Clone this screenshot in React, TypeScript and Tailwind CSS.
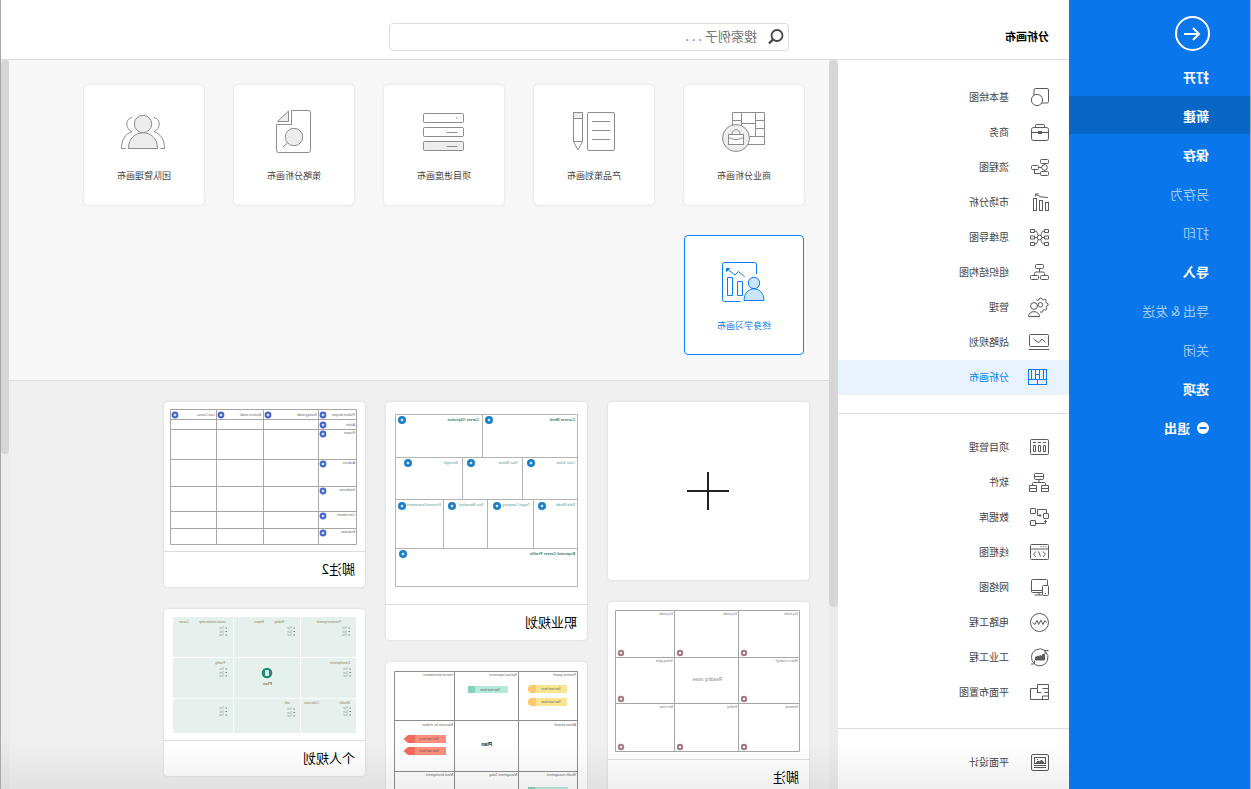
import { useState, type ReactNode } from 'react';
import clsx from 'clsx';

type Point = [number, number];
type Label = [number, number, string];

interface MenuItem {
    label: string;
    muted?: boolean;
    icon?: ReactNode;
}

interface Category {
    label: string;
    icon: ReactNode;
}

const menuItems: MenuItem[] = [
    { label: '打开' },
    { label: '新建' },
    { label: '保存' },
    { label: '另存为', muted: true },
    { label: '打印', muted: true },
    { label: '导入' },
    { label: '导出 & 发送', muted: true },
    { label: '关闭', muted: true },
    { label: '选项' },
    {
        label: '退出',
        icon: (
            <svg viewBox="0 0 12 12" className="mr-[7px] h-3 w-3" aria-hidden="true">
                <circle cx="6" cy="6" r="6" fill="#fff" />
                <path d="M2.5 6h7" stroke="#0a76eb" strokeWidth="2" />
            </svg>
        ),
    },
];

const categoryGroups: Category[][] = [
    [
        {
            label: '基本绘图',
            icon: (
                <>
                    <rect x="1.5" y="1.5" width="14.5" height="14.5" rx="1.5" />
                    <circle cx="13" cy="13" r="5.6" fill="#fff" />
                </>
            ),
        },
        {
            label: '商务',
            icon: (
                <>
                    <rect x="1.5" y="5.5" width="17" height="13" rx="2" />
                    <path d="M5.5 5.5v-2q0-1 1-1h7q1 0 1 1v2M1.5 10.5h17" />
                    <rect x="8.5" y="9.5" width="3" height="2" fill="currentColor" />
                </>
            ),
        },
        {
            label: '流程图',
            icon: (
                <>
                    <rect x="1.5" y="2.5" width="8" height="4" rx="1" />
                    <rect x="1.5" y="14.5" width="8" height="4" rx="1" />
                    <rect x="11.5" y="8.5" width="7" height="4" rx="1" />
                    <circle cx="5.5" cy="10.5" r="2.8" />
                    <path d="M5.5 6.5v1.2M5.5 13.3v1.2M8.3 10.5h3.2M15.5 12.5v4h-6" />
                </>
            ),
        },
        {
            label: '市场分析',
            icon: (
                <>
                    <rect x="1.5" y="10.5" width="3" height="8" />
                    <rect x="7.5" y="8.5" width="3" height="10" />
                    <rect x="13.5" y="6.5" width="3" height="12" />
                    <path d="M2 5.5q8 .4 12-3M11.5 1.8l3 .2-.3 2.6" />
                </>
            ),
        },
        {
            label: '思维导图',
            icon: (
                <>
                    <path d="M1.5 2.5h4v3h-4zM1.5 9h4v3h-4zM1.5 15.5h4v3h-4zM15.5 2.5h4v3h-4zM15.5 9h4v3h-4zM15.5 15.5h4v3h-4z" />
                    <circle cx="10.5" cy="10.5" r="2.3" />
                    <path d="M5.5 10.5h2.7M12.8 10.5h2.7M5.5 4q3.3 0 3.5 4.5M5.5 17q3.3 0 3.5-4.5M15.5 4Q12.2 4 12 8.5M15.5 17q-3.3 0-3.5-4.5" />
                </>
            ),
        },
        {
            label: '组织结构图',
            icon: (
                <>
                    <rect x="6.5" y="2.5" width="8" height="4" rx="1" />
                    <rect x="1.5" y="13.5" width="8" height="4" rx="1" />
                    <rect x="11.5" y="13.5" width="8" height="4" rx="1" />
                    <path d="M10.5 6.5v3.5M5.5 13.5v-2q0-1.5 1.5-1.5h7q1.5 0 1.5 1.5v2" />
                </>
            ),
        },
        {
            label: '管理',
            icon: (
                <>
                    <path d="M10 14.5l-1 .9-1.6-.6-.2-1.5-1.4-.7-1.5.6-1.2-1.3.7-1.5-.5-1.4-1.4-.7.1-1.7 1.5-.5.7-1.4-.5-1.5 1.4-1.1 1.4.8 1.4-.5.8-1.4 1.7.2.4 1.5 1.4.7 1.4-.6" />
                    <circle cx="9.5" cy="7.8" r="2.3" />
                    <circle cx="16" cy="9" r="3.4" fill="#fff" />
                    <path d="M10.5 19.5c0-6.5 11-6.5 11 0z" />
                </>
            ),
        },
        {
            label: '战略规划',
            icon: (
                <>
                    <rect x="1.5" y="2.5" width="19" height="12" rx="1" />
                    <path d="M1 17.5h20M4.5 10.5l3.5-3.5 3 3.5 2-1 3.5-2.5" />
                </>
            ),
        },
        {
            label: '分析画布',
            icon: (
                <>
                    <rect x="3.5" y="2.5" width="18" height="15" />
                    <path d="M3.5 12.5h18M6.5 2.5v10M10.5 2.5v10M14.5 2.5v10M18.5 2.5v10M10.5 7.5h4M12.5 12.5v5" />
                </>
            ),
        },
    ],
    [
        {
            label: '项目管理',
            icon: (
                <>
                    <rect x="1.5" y="2.5" width="18" height="15" rx="1" />
                    <path d="M4 5.5h3M9 5.5h3M14 5.5h3M4.5 8.5h2v6h-2zM9.5 8.5h2v6h-2zM14.5 8.5h2v6h-2z" />
                </>
            ),
        },
        {
            label: '软件',
            icon: (
                <>
                    <rect x="6.5" y="1.5" width="9" height="6" rx="1" />
                    <path d="M6.5 4.5h9M11 7.5v3M4.5 13.5v-2q0-1 1-1h11q1 0 1 1v2" />
                    <path d="M1.5 13.5h7v6h-7zM1.5 16.5h7M13.5 13.5h7v6h-7zM13.5 16.5h7" />
                </>
            ),
        },
        {
            label: '数据库',
            icon: (
                <>
                    <rect x="14.5" y="1.5" width="5" height="5" rx=".5" />
                    <rect x="1.5" y="6.5" width="5" height="5" rx=".5" />
                    <rect x="14.5" y="13.5" width="5" height="5" rx=".5" />
                    <path d="M3.5 6.5v-4h9v6H9M10.5 7L9 8.5l1.5 1.5M14.5 16.5h-10v-3M3 15l1.5-1.5L6 15" />
                </>
            ),
        },
        {
            label: '线框图',
            icon: (
                <>
                    <rect x="1.5" y="2.5" width="18" height="15" rx="1" />
                    <path d="M1.5 7h18M3.5 4.7h1M6 4.7h1M8.5 4.7h1M7 9.5l-2.5 2.7L7 15M14 9.5l2.5 2.7L14 15M11.5 9.5l-2 5" />
                </>
            ),
        },
        {
            label: '网络图',
            icon: (
                <>
                    <path d="M2.5 8.5v-5q0-1 1-1h14q1 0 1 1v11q0 1-1 1h-10M7.5 13.5h11M11 15.5v2.5M7.5 18h8" />
                    <rect x="1.5" y="8.5" width="6" height="10" rx="1" />
                    <path d="M4 16.5h1" />
                </>
            ),
        },
        {
            label: '电路工程',
            icon: (
                <>
                    <circle cx="10.5" cy="10.5" r="9" />
                    <path d="M3.5 10.5l1.5-2 2 4 2-4.5 2.3 4.5 1.7-4 2.2 4 1.8-2" />
                </>
            ),
        },
        {
            label: '工业工程',
            icon: (
                <>
                    <path d="M2.5 13.5A8.5 8.5 0 0 0 15 17.5M5 3.5A8.500 8.500 0 0 1 18.500 10.500M4.500 4.500A8.500 8.500 0 0 0 2.500 13.500M18.500 10.500A8.500 8.500 0 0 1 16 16.500" />
                    <path d="M1.5 3.5h3.5v3.500M19 17h-3.500v-3.500" />
                    <path d="M5.5 13V7.5h2v2l2.7-1v1.5l2.3-1v1h2v3z" fill="currentColor" />
                </>
            ),
        },
        {
            label: '平面布置图',
            icon: (
                <path d="M1.5 2.5h11v4h7v11h-18zM1.5 6.5h6M1.5 10.5h4M12.5 6.5v4M9 10.5h4M7.5 17.5v-3.5h-6" />
            ),
        },
    ],
    [
        {
            label: '平面设计',
            icon: (
                <>
                    <rect x="1.5" y="2.5" width="17" height="16" rx="1.5" />
                    <rect x="4.5" y="5.5" width="11" height="6" />
                    <path d="M6 11l2.5-3 2 2 1.5-1 2 2z" fill="currentColor" />
                    <path d="M4 13.5h12M4 15.5h12M12 7.5h1" />
                </>
            ),
        },
    ],
];

const templates: Category[] = [
    {
        label: '商业分析画布',
        icon: (
            <>
                <path d="M3.5 4.5h32v32h-32zM12.5 4.5v24M26.5 4.5v24M3.5 12.5h9M3.5 20.5h9M26.5 12.5h9M12.5 15.5h14M3.5 28.5h20" />
                <circle cx="32" cy="30" r="13.5" fill="#ededed" />
                <path d="M28 26.5c0-6.5 8-6.5 8 0" />
                <rect x="24.5" y="26.5" width="15" height="10" fill="#fff" />
                <path d="M24.5 29.5q7.5 4 15 0" />
            </>
        ),
    },
    {
        label: '产品策划画布',
        icon: (
            <>
                <rect x="3.5" y="4.5" width="27" height="38" rx="1.5" />
                <path d="M8 13.5h18M8 22.5h18M8 31.5h18" />
                <path d="M35.5 4.5h9v29l-4.5 8.5-4.5-8.5zM35.5 33.5h9" />
                <path d="M35.5 4.5h9v6h-9z" fill="#ededed" />
            </>
        ),
    },
    {
        label: '项目进度画布',
        icon: (
            <>
                <rect x="4.5" y="5.5" width="40" height="9" rx="1" />
                <rect x="4.5" y="19.5" width="40" height="9" rx="1" />
                <rect x="4.5" y="33.5" width="40" height="9" rx="1" fill="#ededed" />
                <path d="M10.5 10h1.5M10.5 24.5h11M10.5 38.5h11" />
            </>
        ),
    },
    {
        label: '策略分析画布',
        icon: (
            <>
                <path d="M26.5 2.5h-17q-2 0-2 2v38q0 2 2 2h30q2 0 2-2v-26h-15z" />
                <path d="M29.5 3v10.5h11z" fill="#ededed" />
                <circle cx="24" cy="29" r="8.7" fill="#ededed" />
                <path d="M30.5 35l4.5 4" />
            </>
        ),
    },
    {
        label: '团队管理画布',
        icon: (
            <>
                <circle cx="25" cy="16" r="8.7" fill="#ededed" />
                <path d="M10.5 40.5c0-21 29-21 29 0z" fill="#ededed" />
                <path d="M14 9.3c-7 2-7 11 0 14.4C7 26 3.5 32 3.5 40.5h4M36 9.3c7 2 7 11 0 14.4C43 26 46.5 32 46.5 40.5h-4" />
            </>
        ),
    },
    {
        label: '终身学习画布',
        icon: (
            <>
                <path d="M11.5 16V6.5q0-2 2-2h30q2 0 2 2v35q0 2-2 2h-16" />
                <path d="M35.5 19.5h5v18h-5zM25.5 23.5h5v14h-5z" />
                <path d="M23.5 18.5l6-5 3.5 3.5 7-5.5" />
                <path d="M41.5 10.5h-3l3 3z" fill="currentColor" />
                <circle cx="14" cy="25" r="5.7" fill="#cce5ff" />
                <path d="M4 42.5c0-15.5 20-15.5 20 0z" fill="#cce5ff" />
            </>
        ),
    },
];

function Dots({ points, color, r }: { points: Point[]; color: string; r: number }) {
    return (
        <>
            {points.map(([x, y]) => (
                <g key={`${x}-${y}`}>
                    <circle cx={x} cy={y} r={r} fill={color} />
                    <rect x={x - 1.3} y={y - 1.3} width="2.6" height="2.6" rx="1" fill="#fff" fillOpacity=".8" />
                </g>
            ))}
        </>
    );
}

function Labels({ items, color, size }: { items: Label[]; color: string; size: number }) {
    return (
        <g fill={color} fontSize={size} fontFamily="'Liberation Sans', Arial, sans-serif">
            {items.map(([x, y, text]) => (
                <text key={`${x}-${y}`} x={x} y={y}>
                    {text}
                </text>
            ))}
        </g>
    );
}

function CareerThumb() {
    return (
        <svg viewBox="0 0 201 202" className="block w-full" aria-hidden="true">
            <path
                d="M9.5 12.5h182v172h-182zM9.5 55.5h182M9.5 97.5h182M9.5 146.5h182M104.5 12.5v43M64.5 55.5v42M124.5 55.5v42M53.5 97.5v49M99.5 97.5v49M143.5 97.5v49"
                fill="none"
                stroke="#b4b4b4"
            />
            <Dots
                r={4}
                color="#1b7fc8"
                points={[
                    [98, 18], [185, 18], [56, 61], [116, 61], [179, 61],
                    [45, 104], [90, 104], [135, 104], [185, 104], [184, 152],
                ]}
            />
            <g fontWeight="bold">
                <Labels
                    size={4}
                    color="#2b7d77"
                    items={[[12, 19, 'Current Work'], [108, 19, 'Career Objective'], [12, 153, 'Expected Career Profile']]}
                />
            </g>
            <Labels
                size={3.8}
                color="#5c9a95"
                items={[
                    [12, 62, 'Core Value'], [69, 62, 'Your Motive'], [129, 62, 'Strength'],
                    [12, 104, 'Role Model'], [57, 104, 'Target Company'],
                    [103, 104, 'Your Boundary'], [146, 104, 'Personal Investment'],
                ]}
            />
        </svg>
    );
}

function PlatformThumb() {
    return (
        <svg viewBox="0 0 201 149" className="block w-full" aria-hidden="true">
            <path
                d="M8.5 7.5h186v135h-186zM8.5 17.5h186M8.5 27.5h186M8.5 57.5h186M8.5 84.5h186M8.5 109.5h186M8.5 126.5h186M46.5 7.5v135M101.5 7.5v135M148.5 7.5v135"
                fill="none"
                stroke="#a6a6a6"
            />
            <Dots
                r={3.4}
                color="#4467cc"
                points={[
                    [42, 13], [97, 13], [144, 13], [190, 13], [42, 23],
                    [42, 32], [42, 62], [42, 89], [42, 114], [42, 131],
                ]}
            />
            <Labels
                size={3}
                color="#666"
                items={[
                    [10, 14, 'Platform designer'], [48, 14, 'Strategy model'], [104, 14, 'Business model'],
                    [150, 14, 'Lean Canvas'], [10, 24, 'Author'], [10, 32, 'Purpose'], [10, 62, 'Audience'],
                    [10, 89, 'Introduction'], [10, 114, 'Core element'], [10, 131, 'Evaluation'],
                ]}
            />
        </svg>
    );
}

function PersonalThumb() {
    const lists: Point[] = [
        [15, 19], [70, 19], [138, 19], [14, 60], [138, 60], [14, 99], [70, 100], [138, 99],
    ];

    return (
        <svg viewBox="0 0 201 131" className="block w-full" aria-hidden="true">
            <g fill="#e6f1ee">
                {[8, 49, 90].map((y) => (
                    <g key={y}>
                        <rect x="9" y={y} width="55" height={y === 90 ? 34 : 40} />
                        <rect x="65" y={y} width="66" height={y === 90 ? 34 : 40} />
                        <rect x="132" y={y} width="60" height={y === 90 ? 34 : 40} />
                    </g>
                ))}
            </g>
            <Labels
                size={3.4}
                color="#8f8053"
                items={[
                    [24, 14, 'Personal growth'], [81, 14, 'Hobby'], [101, 14, 'Hopes'],
                    [139, 14, 'social relationship'], [176, 14, 'Career'], [15, 55, 'Development'],
                    [140, 55, 'Family'], [15, 95, 'Wealth'], [46, 95, 'Collection'], [75, 95, 'self'],
                ]}
            />
            {lists.map(([x, y]) => (
                <g key={`${x}-${y}`}>
                    <path
                        d={`M${x} ${y}h1.5M${x} ${y + 3.5}h1.5M${x} ${y + 7}h1.5`}
                        stroke="#6f7f7b"
                        strokeWidth="1.2"
                    />
                    <Labels
                        size={2.6}
                        color="#8a9793"
                        items={[[x + 3, y + 1, 'Text'], [x + 3, y + 4.5, 'Text'], [x + 3, y + 8, 'Text']]}
                    />
                </g>
            ))}
            <circle cx="98" cy="64" r="5.3" fill="#1d8a72" />
            <rect x="96" y="61" width="4" height="6" rx=".7" fill="#d5ece6" />
            <g fontWeight="bold">
                <Labels size={4.4} color="#8f7a4c" items={[[93, 76, 'Plan']]} />
            </g>
        </svg>
    );
}

function PlanThumb() {
    return (
        <svg viewBox="0 0 201 170" className="block w-full" aria-hidden="true">
            <path
                d="M9.5 9.5h183v152h-183zM9.5 58.5h183M9.5 109.5h183M68.5 9.5v152M132.5 9.5v152"
                fill="none"
                stroke="#8c8c8c"
            />
            <Labels
                size={3.2}
                color="#666"
                items={[
                    [11, 14, 'Personal growth'], [70, 14, 'Spiritual experience'], [134, 14, 'Internal development'],
                    [11, 64, 'Advanced work'], [134, 64, 'Education for children'],
                    [11, 114, 'Wealth management'], [70, 114, 'Management Today'], [134, 114, 'Moral development'],
                ]}
            />
            {[23, 36].map((y) => (
                <g key={y}>
                    <rect x="20" y={y} width="32" height="8" fill="#fae593" />
                    <path d={`M51 ${y}h4a4 4 0 0 1 0 8h-4z`} fill="#fcc76d" />
                </g>
            ))}
            <rect x="79" y="24" width="34" height="7" fill="#b5e9dc" />
            <rect x="112" y="24" width="7" height="7" fill="#87d1bd" />
            <rect x="19" y="125" width="34" height="7" fill="#b5e9dc" />
            <rect x="52" y="125" width="7" height="7" fill="#87d1bd" />
            {[73, 85].map((y) => (
                <g key={y}>
                    <rect x="141" y={y} width="32" height="8" fill="#fb8f7d" />
                    <path d={`M172 ${y}h7l4.5 4-4.5 4h-7z`} fill="#f26d5c" />
                </g>
            ))}
            <Labels
                size={3.2}
                color="#555"
                items={[
                    [26, 28, 'Your text here'], [26, 41, 'Your text here'], [87, 29, 'Your text here'],
                    [148, 78, 'Your text here'], [148, 90, 'Your text here'],
                ]}
            />
            <g fontWeight="bold">
                <Labels size={5} color="#111" items={[[95, 84, 'Plan']]} />
            </g>
        </svg>
    );
}

function ReadingThumb() {
    return (
        <svg viewBox="0 0 201 157" className="block w-full" aria-hidden="true">
            <path
                d="M9.5 8.5h184v141h-184zM9.5 55.5h184M9.5 101.5h184M70.5 8.5v141M134.5 8.5v141"
                fill="none"
                stroke="#a6a6a6"
            />
            <Labels
                size={3}
                color="#777"
                items={[
                    [11, 13, 'Key words'], [72, 13, 'Key words'], [136, 13, 'Key words'],
                    [11, 60, 'What is reading?'], [136, 60, 'Setting goals'],
                    [11, 106, 'Summary'], [72, 106, 'Finding'], [136, 106, 'Best story'],
                ]}
            />
            <Labels size={4.6} color="#8a8a8a" items={[[87, 79, 'Reading notes']]} />
            <Dots
                r={3.2}
                color="#a5787f"
                points={[
                    [65, 51], [129, 51], [188, 51], [65, 97], [188, 97], [65, 145], [129, 145], [188, 145],
                ]}
            />
        </svg>
    );
}

function ExampleCard({ label, children }: { label?: string; children: ReactNode }) {
    return (
        <button
            type="button"
            className="w-full overflow-hidden rounded bg-white text-left shadow-[0_0_3px_rgba(0,0,0,0.12)]"
        >
            {children}
            {label && (
                <span className="flex h-9 items-center border-t border-[#dcdcdc] px-[10px] pb-0.5 text-[13px] text-black">
                    {label}
                </span>
            )}
        </button>
    );
}

function ScrollTrack({ thumbClass, className }: { thumbClass: string; className: string }) {
    return (
        <div className={clsx('shrink-0 bg-[#ebebeb]', className)} aria-hidden="true">
            <div className={clsx('rounded-full bg-[#d6d6d6]', thumbClass)} />
        </div>
    );
}

export default function App() {
    const [menu, setMenu] = useState('新建');
    const [category, setCategory] = useState('分析画布');
    const [template, setTemplate] = useState('终身学习画布');

    return (
        <div
            className="relative flex h-screen w-full -scale-x-100 overflow-hidden border-x border-[#a8a8a8] bg-white font-['Noto_Sans_CJK_SC',sans-serif] text-[#444]"
            lang="zh-CN"
        >
            <nav className="w-[181px] shrink-0 bg-[#0a76eb] pt-4">
                <button
                    type="button"
                    aria-label="返回"
                    className="mb-[6px] ml-10 flex h-[35px] w-[35px] items-center justify-center rounded-full border-2 border-white"
                >
                    <svg viewBox="0 0 18 16" className="h-4 w-[18px]" fill="none" stroke="#fff" strokeWidth="2" aria-hidden="true">
                        <path d="M17 8H2M8 2L2 8l6 6" />
                    </svg>
                </button>
                <ul className="flex flex-col gap-px">
                    {menuItems.map((item) => (
                        <li key={item.label}>
                            <button
                                type="button"
                                onClick={() => setMenu(item.label)}
                                className={clsx(
                                    'flex h-[38px] w-full items-center pt-0.5 pl-[41px] text-[13px]',
                                    menu === item.label && 'bg-[#0866c6]',
                                    item.muted ? 'text-[#a0cbf8]' : 'font-bold text-white'
                                )}
                            >
                                {item.icon}
                                {item.label}
                            </button>
                        </li>
                    ))}
                </ul>
            </nav>

            <div className="flex min-w-0 flex-1 flex-col">
                <header className="flex h-[60px] shrink-0 border-b border-[#dcdcdc]">
                    <h1 className="w-[280px] shrink-0 pt-7 pl-5 text-[11px] leading-4 font-bold text-black">
                        分析画布
                    </h1>
                    <div className="mt-[23px] flex h-7 w-[400px] items-center rounded-sm border border-[#dcdcdc] pl-1">
                        <svg viewBox="0 0 16 16" className="h-4 w-4 shrink-0" fill="none" stroke="#444" aria-hidden="true">
                            <circle cx="7" cy="6.5" r="5.5" strokeWidth="1.8" />
                            <path d="M11 10.5l4 4" strokeWidth="2.4" />
                        </svg>
                        <input
                            type="search"
                            aria-label="搜索例子"
                            placeholder="搜索例子 . . ."
                            className="min-w-0 flex-1 bg-transparent pr-2 pb-0.5 pl-[11px] text-[13px] text-[#444] outline-none placeholder:text-[#757575]"
                        />
                    </div>
                </header>

                <div className="flex min-h-0 flex-1">
                    <aside className="w-[231px] shrink-0 overflow-hidden bg-white pt-5">
                        {categoryGroups.map((group, index) => (
                            <ul
                                key={index}
                                className={clsx(index > 0 && 'mt-[18px] border-t border-[#dcdcdc] pt-4')}
                            >
                                {group.map((item) => (
                                    <li key={item.label}>
                                        <button
                                            type="button"
                                            onClick={() => setCategory(item.label)}
                                            className={clsx(
                                                'flex h-[35px] w-full items-center pl-[19px] text-[10px]',
                                                category === item.label ? 'bg-[#e8f3ff] text-[#0a7cf5]' : 'text-[#444]'
                                            )}
                                        >
                                            <svg
                                                viewBox="0 0 22 21"
                                                className={clsx(
                                                    'mr-[19px] h-[21px] w-[22px] shrink-0',
                                                    category !== item.label && 'text-[#5a5a5a]'
                                                )}
                                                fill="none"
                                                stroke="currentColor"
                                                aria-hidden="true"
                                            >
                                                {item.icon}
                                            </svg>
                                            <span className="pb-0.5">{item.label}</span>
                                        </button>
                                    </li>
                                ))}
                            </ul>
                        ))}
                    </aside>

                    <ScrollTrack className="w-[9px]" thumbClass="h-3/4" />

                    <main className="flex min-w-0 flex-1 flex-col overflow-hidden">
                        <section className="flex shrink-0 flex-wrap gap-[30px] border-b border-[#dcdcdc] bg-[#f7f7f7] p-[25px]">
                            {templates.map((item) => (
                                <button
                                    key={item.label}
                                    type="button"
                                    onClick={() => setTemplate(item.label)}
                                    className={clsx(
                                        'flex h-[120px] w-[120px] flex-col items-center rounded border bg-white pt-[22px] text-[9px] leading-4',
                                        template === item.label
                                            ? 'border-[#0a84ff] text-[#0a7cf5]'
                                            : 'border-white text-[#444] shadow-[0_0_3px_rgba(0,0,0,0.12)]'
                                    )}
                                >
                                    <svg
                                        viewBox="0 0 48 48"
                                        className={clsx('mb-3 h-12 w-12', template !== item.label && 'text-[#8c8c8c]')}
                                        fill="none"
                                        stroke="currentColor"
                                        aria-hidden="true"
                                    >
                                        {item.icon}
                                    </svg>
                                    {item.label}
                                </button>
                            ))}
                        </section>

                        <section className="flex min-h-0 flex-1 items-start gap-[21px] overflow-hidden bg-[#f0f0f0] pt-[21px] pl-5">
                            <div className="flex w-[201px] flex-col gap-[22px]">
                                <button
                                    type="button"
                                    aria-label="新建画布"
                                    className="flex h-[178px] items-center justify-center rounded bg-white shadow-[0_0_3px_rgba(0,0,0,0.12)]"
                                >
                                    <svg viewBox="0 0 42 38" className="h-[38px] w-[42px]" stroke="#222" strokeWidth="2" aria-hidden="true">
                                        <path d="M0 19h42M21 0v38" />
                                    </svg>
                                </button>
                                <ExampleCard label="脚注">
                                    <ReadingThumb />
                                </ExampleCard>
                            </div>
                            <div className="flex w-[201px] flex-col gap-[22px]">
                                <ExampleCard label="职业规划">
                                    <CareerThumb />
                                </ExampleCard>
                                <ExampleCard>
                                    <PlanThumb />
                                </ExampleCard>
                            </div>
                            <div className="flex w-[201px] flex-col gap-[22px]">
                                <ExampleCard label="脚注2">
                                    <PlatformThumb />
                                </ExampleCard>
                                <ExampleCard label="个人规划">
                                    <PersonalThumb />
                                </ExampleCard>
                            </div>
                        </section>
                    </main>

                    <ScrollTrack className="w-2" thumbClass="h-[54%]" />
                </div>
            </div>

            <div className="pointer-events-none absolute right-0 bottom-0 left-[181px] h-12 bg-linear-to-b from-transparent to-black/6" />
        </div>
    );
}
